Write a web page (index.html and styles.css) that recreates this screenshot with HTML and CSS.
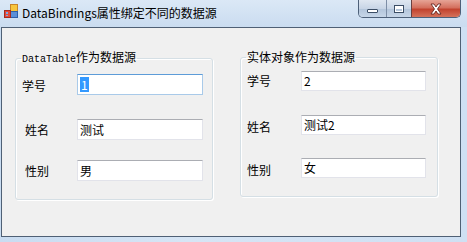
FILE: index.html
```html
<!DOCTYPE html>
<html lang="zh-CN">
<head>
<meta charset="utf-8">
<title>DataBindings属性绑定不同的数据源</title>
<link rel="stylesheet" href="styles.css">
</head>
<body>
<div class="window">
  <div class="titlebar">
    <svg class="app-icon" width="16" height="16" viewBox="0 0 16 16">
      <rect x="7.5" y="1.5" width="7" height="7" fill="#f7c63d" stroke="#c8862a"/>
      <rect x="7.5" y="8.5" width="7" height="6" fill="#5b8fd8" stroke="#2f5fa8"/>
      <rect x="1.5" y="7.5" width="6" height="7" fill="#e24a3a" stroke="#a82a20"/>
      <rect x="3" y="9" width="2" height="2" fill="#7aa7e6"/>
      <rect x="3" y="12" width="2" height="1" fill="#7aa7e6"/>
    </svg>
    <span class="title">DataBindings属性绑定不同的数据源</span>
    <div class="caption-buttons">
      <div class="cap-btn cap-min"><span class="min-glyph"></span></div>
      <div class="cap-btn cap-max"><span class="max-glyph"></span></div>
      <div class="cap-btn cap-close">
        <svg width="14" height="12" viewBox="0 0 14 12">
          <path d="M2 1 L5 1 L7 4 L9 1 L12 1 L8.5 6 L12 11 L9 11 L7 8 L5 11 L2 11 L5.5 6 Z" fill="#fff" stroke="#5a1a14" stroke-width="0.8" stroke-linejoin="round"/>
        </svg>
      </div>
    </div>
  </div>
  <div class="client">
    <fieldset class="group group-left">
      <legend><span class="mono">DataTable</span>作为数据源</legend>
      <div class="row row-1">
        <span class="label label-a">学号</span>
        <div class="textbox focused"><span class="sel">1</span></div>
      </div>
      <div class="row row-2">
        <span class="label label-b">姓名</span>
        <div class="textbox">测试</div>
      </div>
      <div class="row row-3">
        <span class="label label-b">性别</span>
        <div class="textbox">男</div>
      </div>
    </fieldset>
    <fieldset class="group group-right">
      <legend>实体对象作为数据源</legend>
      <div class="row row-1">
        <span class="label label-a">学号</span>
        <div class="textbox">2</div>
      </div>
      <div class="row row-2">
        <span class="label label-a">姓名</span>
        <div class="textbox">测试2</div>
      </div>
      <div class="row row-3">
        <span class="label label-a">性别</span>
        <div class="textbox">女</div>
      </div>
    </fieldset>
  </div>
</div>
</body>
</html>
```

FILE: styles.css
```css
* { box-sizing: border-box; }
html, body {
  margin: 0;
  padding: 0;
}
body {
  width: 467px;
  height: 242px;
  overflow: hidden;
  font-family: "Noto Sans CJK SC", "Liberation Sans", sans-serif;
  font-size: 12px;
  color: #000;
}
.window {
  width: 467px;
  height: 242px;
  display: flex;
  flex-direction: column;
  background: linear-gradient(to right, #c9dcf1 0%, #d6e5f5 40%, #cfe0f3 100%);
}
.titlebar {
  height: 27px;
  display: flex;
  align-items: flex-start;
  padding-left: 3px;
  background: linear-gradient(to bottom, #dbe8f6 0%, #cadcf0 100%);
}
.app-icon {
  margin-top: 3px;
  flex: none;
}
.title {
  margin-left: 3px;
  margin-top: 4px;
  line-height: 17px;
  font-size: 12px;
  white-space: nowrap;
  color: #000;
}
.caption-buttons {
  margin-left: auto;
  margin-right: 6px;
  display: flex;
  height: 18px;
  border: 1px solid #4d6079;
  border-top: none;
  border-radius: 0 0 5px 5px;
  overflow: hidden;
}
.cap-btn {
  height: 17px;
  display: flex;
  align-items: center;
  justify-content: center;
}
.cap-min {
  width: 28px;
  background: linear-gradient(to bottom, #dfe7f1 0%, #c8d5e6 50%, #b2c4da 51%, #c7d6e8 100%);
  border-right: 1px solid #7d8ea6;
}
.cap-max {
  width: 25px;
  background: linear-gradient(to bottom, #dfe7f1 0%, #c8d5e6 50%, #b2c4da 51%, #c7d6e8 100%);
  border-right: 1px solid #6a4040;
}
.cap-close {
  width: 48px;
  background: linear-gradient(to bottom, #e6a496 0%, #d4705e 45%, #c2432f 55%, #d5735c 100%);
}
.min-glyph {
  display: block;
  width: 11px;
  height: 4px;
  margin-top: 5px;
  background: #fff;
  border: 1px solid #3c4e66;
  border-radius: 1px;
}
.max-glyph {
  display: block;
  width: 10px;
  height: 8px;
  background: transparent;
  border: 1px solid #3c4e66;
  box-shadow: inset 0 0 0 1px #fff, inset 0 2px 0 1px #fff;
}
.client {
  margin-left: 1px;
  margin-right: 6px;
  height: 210px;
  background: #f0f0f0;
  border: 1px solid #4f6075;
  display: flex;
  align-items: flex-start;
  padding-top: 22px;
  padding-left: 13px;
  gap: 27px;
}
.group {
  width: 198px;
  margin: 0;
  padding: 0 0 18px 0;
  border: 1px solid #d5dfe5;
  border-radius: 3px;
  box-shadow: inset 1px 1px 0 #fff, 1px 1px 0 #fff;
  min-width: 0;
}
.group legend {
  padding: 0 1px;
  margin-left: 5px;
  font-size: 12px;
  line-height: 14px;
}
.mono {
  font-family: "Liberation Mono", monospace;
  font-size: 10px;
}
.row {
  display: flex;
  align-items: center;
  height: 21px;
}
.group-left .row-1 { margin-top: 7px; }
.group-left .row-2 { margin-top: 24px; }
.group-left .row-3 { margin-top: 20px; }
.group-right .row-1 { margin-top: 6px; }
.group-right .row-2 { margin-top: 23px; }
.group-right .row-3 { margin-top: 22px; }
.label {
  flex: none;
  line-height: 16px;
}
.group-left .label { width: 61px; }
.group-right .label { width: 60px; }
.label-a { padding-left: 6px; }
.label-b { padding-left: 9px; }
.group-left .row-1 .label { margin-top: 3px; }
.group-right .row-2 .label { margin-top: 4px; }
.group-right .row-3 .label { margin-top: 4px; }
.textbox {
  width: 126px;
  height: 21px;
  background: #fff;
  border: 1px solid #e2e3ea;
  border-top-color: #abadb3;
  padding: 1px 2px;
  line-height: 17px;
  white-space: nowrap;
}
.group-right .textbox { width: 125px; height: 20px; line-height: 16px; }
.textbox.focused {
  border-color: #a9cae9;
  border-top-color: #5d9cd8;
}
.sel {
  display: inline-block;
  background: #3399ff;
  color: #fff;
  line-height: 15px;
  padding: 0 1px;
  margin-top: 1px;
}
```
